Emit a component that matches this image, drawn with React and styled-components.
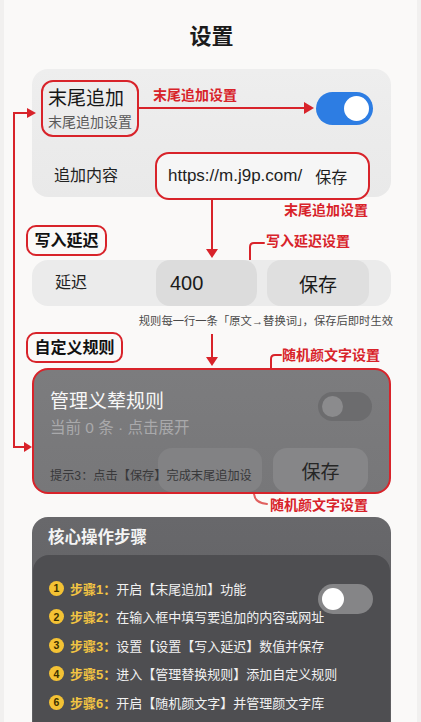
import React from 'react';
import styled, { createGlobalStyle } from 'styled-components';

const RED = '#d8232a';

const GlobalStyle = createGlobalStyle`
  html, body {
    margin: 0;
    padding: 0;
    overflow: hidden;
    background: #f1f0ef;
  }
  body {
    font-family: "Liberation Sans", "Noto Sans CJK SC", sans-serif;
  }
  * { box-sizing: border-box; }
`;

const Frame = styled.div`
  position: relative;
  width: 421px;
  height: 722px;
  overflow: hidden;
`;

const Page = styled.div`
  margin: 0 4px;
  min-height: 719px;
  background: #faf9f8;
  border-radius: 0 0 14px 14px;
  padding: 22px 26px 0 28px;
  display: flex;
  flex-direction: column;
`;

const Title = styled.h1`
  margin: 0 0 17px;
  font-size: 22px;
  line-height: 30px;
  font-weight: 600;
  text-align: center;
  color: #1b1b1b;
`;

const SwitchCard = styled.div`
  background: linear-gradient(180deg, #eeeeee, #e9e9e9);
  border-radius: 16px;
`;

const TopRow = styled.div`
  display: flex;
  align-items: center;
  padding: 11px 18px 0 9px;
`;

const LabelBox = styled.div`
  border: 2px solid ${RED};
  border-radius: 12px;
  padding: 5px 5px 3px;
`;

const LabelTitle = styled.div`
  font-size: 19px;
  line-height: 23px;
  color: #161616;
`;

const LabelSub = styled.div`
  margin-top: 2px;
  font-size: 14px;
  line-height: 20px;
  color: #5a5a5a;
`;

const Pointer = styled.div`
  flex: 1;
  align-self: flex-start;
  margin-top: 7px;
  padding-right: 3px;
`;

const PointerText = styled.div`
  margin-left: 14px;
  font-size: 14px;
  line-height: 16px;
  font-weight: 700;
  color: ${RED};
`;

const PointerLine = styled.div`
  position: relative;
  height: 2px;
  margin: 4px 9px 0 0;
  background: ${RED};

  &::after {
    content: '';
    position: absolute;
    right: -10px;
    top: -5px;
    border-left: 10px solid ${RED};
    border-top: 6px solid transparent;
    border-bottom: 6px solid transparent;
  }
`;

const toggleTones = {
  blue: { bg: '#2d7de3', knob: '#ffffff' },
  dim: { bg: '#6c6c6e', knob: '#8b8b8d' },
  light: { bg: '#858587', knob: '#ffffff' },
};

const Toggle = styled.div`
  position: relative;
  flex: none;
  width: ${p => p.$w}px;
  height: ${p => p.$h}px;
  border-radius: 999px;
  background: ${p => toggleTones[p.$tone].bg};

  &::after {
    content: '';
    position: absolute;
    top: 50%;
    ${p => (p.$on ? 'right: 4px;' : 'left: 4px;')}
    width: ${p => p.$h - 8}px;
    height: ${p => p.$h - 8}px;
    margin-top: ${p => -(p.$h - 8) / 2}px;
    border-radius: 50%;
    background: ${p => toggleTones[p.$tone].knob};
  }
`;

const FieldRow = styled.div`
  display: flex;
  align-items: center;
  margin: 15px 0 -3px;
  padding-left: 22px;
`;

const FieldLabel = styled.div`
  width: ${p => p.$w}px;
  font-size: 16px;
  line-height: 22px;
  color: #222;
`;

const UrlBox = styled.div`
  display: flex;
  align-items: center;
  gap: 13px;
  width: 215px;
  height: 48px;
  padding-left: 11px;
  border: 2px solid ${RED};
  border-radius: 14px;
  background: #f6f6f6;
  font-size: 16px;
  color: #1e1e1e;
  white-space: nowrap;
`;

const UrlText = styled.span`
  font-size: 17px;
`;

const Note = styled.div`
  align-self: flex-end;
  margin: 4px 23px 0 0;
  font-size: 14px;
  line-height: 18px;
  font-weight: 700;
  color: ${RED};
`;

const SectionRow = styled.div`
  display: flex;
  justify-content: ${p => (p.$end ? 'flex-end' : 'space-between')};
  align-items: flex-start;
  height: ${p => p.$h}px;
  margin-top: ${p => p.$top}px;
`;

const SectionTag = styled.div`
  margin-left: -6px;
  padding: 0 6.5px;
  border: 2px solid ${RED};
  border-radius: 10px;
  font-size: 16px;
  line-height: 27px;
  font-weight: 700;
  color: #111;
`;

const Callout = styled.div`
  display: flex;
  align-items: flex-start;
  margin-right: ${p => p.$right}px;
`;

const CalloutText = styled.div`
  margin-top: ${p => p.$top}px;
  font-size: 14px;
  line-height: 18px;
  font-weight: 700;
  color: ${RED};
  white-space: nowrap;
`;

const Bracket = styled.svg`
  flex: none;
  display: block;
`;

const DelayCard = styled.div`
  display: flex;
  align-items: center;
  height: 46px;
  padding-left: 23px;
  border-radius: 16px;
  background: #ebebeb;
`;

const DelayInput = styled.div`
  display: flex;
  align-items: center;
  width: 101px;
  height: 46px;
  padding-left: 14px;
  border-radius: 14px;
  background: #dcdcdc;
  font-size: 20px;
  color: #1a1a1a;
`;

const SaveButton = styled.div`
  display: flex;
  align-items: center;
  justify-content: center;
  width: ${p => p.$w}px;
  height: ${p => p.$h}px;
  margin-left: ${p => p.$gap}px;
  border-radius: 14px;
  background: ${p => p.$bg};
  font-size: 19px;
  color: ${p => p.$color};
`;

const Hint = styled.div`
  align-self: flex-end;
  margin: 7px -2px 0 0;
  font-size: 11.3px;
  line-height: 16px;
  color: #4a4a4a;
  white-space: nowrap;
`;

const RuleCard = styled.div`
  padding: 20px 17px 0 16px;
  border: 2px solid ${RED};
  border-radius: 16px;
  background: linear-gradient(180deg, #7c7c7e, #777779);
`;

const RuleHead = styled.div`
  display: flex;
  justify-content: space-between;
  align-items: flex-start;

  ${Toggle} { margin-top: 2px; }
`;

const RuleTitle = styled.div`
  font-size: 19px;
  line-height: 24px;
  color: #f7f7f7;
`;

const RuleSub = styled.div`
  margin-top: 4px;
  font-size: 15.5px;
  line-height: 20px;
  color: #a9a9ab;
`;

const RuleFoot = styled.div`
  display: grid;
  grid-template-columns: 108px 104px 106px;
  height: 44px;
  margin-top: 10px;
`;

const Ghost = styled.div`
  grid-column: 2;
  grid-row: 1;
  border-radius: 14px;
  background: #828284;
`;

const Tip = styled.div`
  grid-column: 1 / 3;
  grid-row: 1;
  align-self: end;
  z-index: 1;
  margin-bottom: 8px;
  font-size: 12.2px;
  line-height: 16px;
  color: #38383a;
  white-space: nowrap;
`;

const RuleSaveCell = styled.div`
  grid-column: 3;
  grid-row: 1;
`;

const StepsCard = styled.div`
  padding-top: 9px;
  border-radius: 16px;
  background: linear-gradient(180deg, #68686b, #5d5d60);
`;

const StepsHead = styled.div`
  padding-left: 16px;
  font-size: 16.5px;
  line-height: 22px;
  font-weight: 700;
  color: #f4f4f4;
`;

const StepsPanel = styled.div`
  position: relative;
  margin: 7px 1px 0;
  padding: 19px 0 24px 16px;
  border-radius: 16px;
  background: #4e4e51;

  ${Toggle} {
    position: absolute;
    top: 29px;
    right: 17px;
  }
`;

const StepRow = styled.div`
  display: flex;
  align-items: center;
  gap: 6px;
  height: 28.5px;
  font-size: 13px;
  color: #f1f1f1;
  white-space: nowrap;
`;

const StepBadge = styled.span`
  display: inline-flex;
  align-items: center;
  justify-content: center;
  width: 15px;
  height: 15px;
  border-radius: 50%;
  background: #f4c234;
  color: #3b3000;
  font-size: 10.5px;
  font-weight: 700;
`;

const StepKey = styled.span`
  color: #f2c443;
  font-weight: 700;
`;

const Overlay = styled.svg`
  position: absolute;
  inset: 0;
  pointer-events: none;
`;

const steps = [
  { n: 1, key: '步骤1：', text: '开启【末尾追加】功能' },
  { n: 2, key: '步骤2：', text: '在输入框中填写要追加的内容或网址' },
  { n: 3, key: '步骤3：', text: '设置【设置【写入延迟】数值并保存' },
  { n: 4, key: '步骤5：', text: '进入【管理替换规则】添加自定义规则' },
  { n: 6, key: '步骤6：', text: '开启【随机颜文字】并管理颜文字库' },
];

export default function App() {
  return (
    <Frame>
      <GlobalStyle />
      <Page>
        <Title>设置</Title>

        <SwitchCard>
          <TopRow>
            <LabelBox>
              <LabelTitle>末尾追加</LabelTitle>
              <LabelSub>末尾追加设置</LabelSub>
            </LabelBox>
            <Pointer>
              <PointerText>末尾追加设置</PointerText>
              <PointerLine />
            </Pointer>
            <Toggle $tone="blue" $w={57} $h={33} $on />
          </TopRow>
          <FieldRow>
            <FieldLabel $w={101}>追加内容</FieldLabel>
            <UrlBox>
              <UrlText>https://m.j9p.com/</UrlText>
              <span>保存</span>
            </UrlBox>
          </FieldRow>
        </SwitchCard>

        <Note>末尾追加设置</Note>

        <SectionRow $h={35} $top={6}>
          <SectionTag>写入延迟</SectionTag>
          <Callout $right={41}>
            <Bracket width="18" height="35" viewBox="0 0 18 35">
              <path d="M2 35 V22 Q2 18 6 18 H16" fill="none" stroke={RED} strokeWidth="2" strokeLinecap="round" />
            </Bracket>
            <CalloutText $top={7}>写入延迟设置</CalloutText>
          </Callout>
        </SectionRow>

        <DelayCard>
          <FieldLabel $w={101}>延迟</FieldLabel>
          <DelayInput>400</DelayInput>
          <SaveButton $w={102} $h={46} $gap={10} $bg="#dfdfdf" $color="#1a1a1a">保存</SaveButton>
        </DelayCard>

        <Hint>规则每一行一条「原文→替换词」，保存后即时生效</Hint>

        <SectionRow $h={36} $top={3}>
          <SectionTag>自定义规则</SectionTag>
          <Callout $right={11}>
            <Bracket width="13" height="36" viewBox="0 0 13 36">
              <path d="M2 36 V27 Q2 23 6 23 H12" fill="none" stroke={RED} strokeWidth="2" strokeLinecap="round" />
            </Bracket>
            <CalloutText $top={14}>随机颜文字设置</CalloutText>
          </Callout>
        </SectionRow>

        <RuleCard>
          <RuleHead>
            <div>
              <RuleTitle>管理义辇规则</RuleTitle>
              <RuleSub>当前 0 条 · 点击展开</RuleSub>
            </div>
            <Toggle $tone="dim" $w={54} $h={29} />
          </RuleHead>
          <RuleFoot>
            <Ghost />
            <Tip>提示3：点击【保存】完成末尾追加设</Tip>
            <RuleSaveCell>
              <SaveButton $w={95} $h={44} $gap={11} $bg="#868688" $color="#262626">保存</SaveButton>
            </RuleSaveCell>
          </RuleFoot>
        </RuleCard>

        <SectionRow $h={23} $top={0} $end>
          <Callout $right={23}>
            <Bracket width="18" height="23" viewBox="0 0 18 23">
              <path d="M2 0 Q3 9 15 10" fill="none" stroke="#e0605f" strokeWidth="2" strokeLinecap="round" />
            </Bracket>
            <CalloutText $top={2}>随机颜文字设置</CalloutText>
          </Callout>
        </SectionRow>

        <StepsCard>
          <StepsHead>核心操作步骤</StepsHead>
          <StepsPanel>
            <Toggle $tone="light" $w={55} $h={30} />
            {steps.map(s => (
              <StepRow key={s.n}>
                <StepBadge>{s.n}</StepBadge>
                <span>
                  <StepKey>{s.key}</StepKey>
                  {s.text}
                </span>
              </StepRow>
            ))}
          </StepsPanel>
        </StepsCard>
      </Page>

      <Overlay width="421" height="722" viewBox="0 0 421 722">
        <g fill="none" stroke={RED} strokeWidth="2">
          <path d="M28 113 H14 V447 H25" />
          <path d="M212 200 V250" />
          <path d="M212 334 V358" />
        </g>
        <g fill={RED}>
          <polygon points="27,108 36,113 27,118" />
          <polygon points="24,442 32,447 24,452" />
          <polygon points="206,249 218,249 212,258" />
          <polygon points="206,357 218,357 212,366" />
        </g>
      </Overlay>
    </Frame>
  );
}
